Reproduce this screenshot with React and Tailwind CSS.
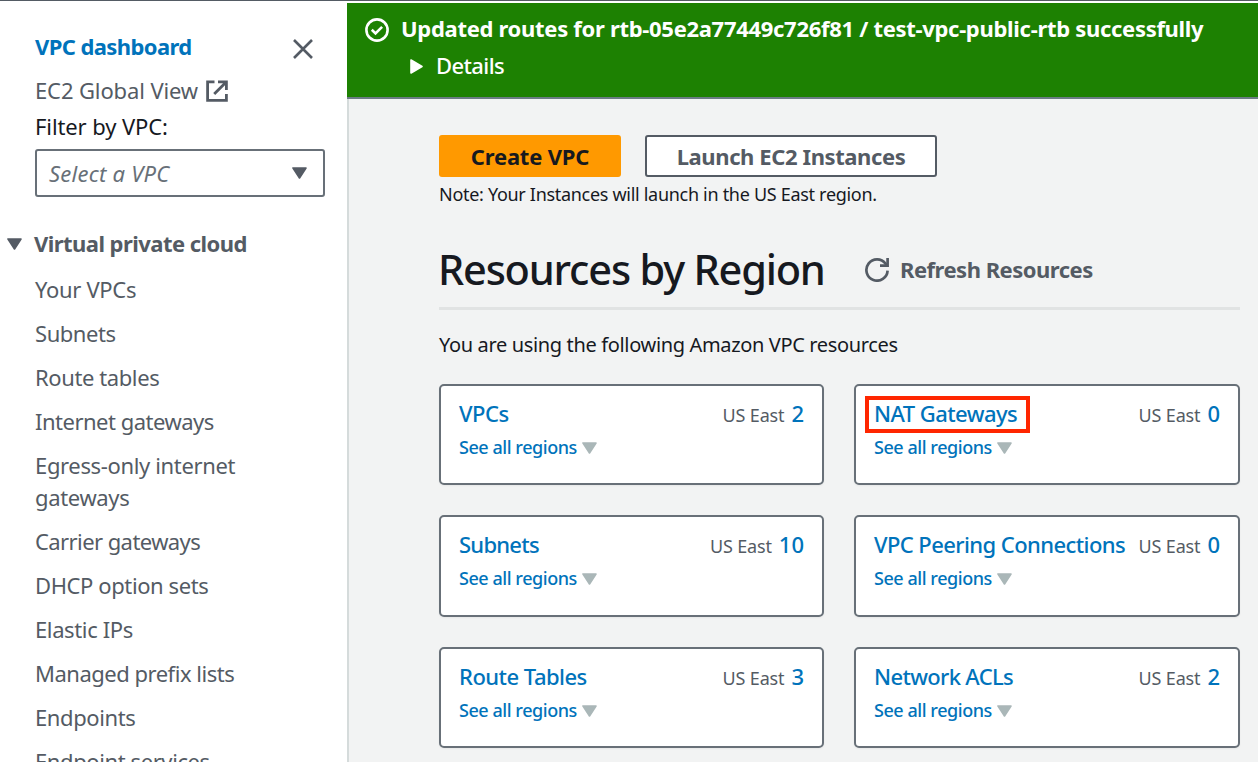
import React from "react";

const navItems = [
  { label: "Your VPCs", spacing: "tracking-[-0.32px]" },
  { label: "Subnets", spacing: "tracking-[-0.45px]" },
  { label: "Route tables", spacing: "tracking-[-0.4px]" },
  { label: "Internet gateways", spacing: "tracking-[-0.5px]" },
  { label: "Egress-only internet gateways", spacing: "tracking-[-0.35px]" },
  { label: "Carrier gateways", spacing: "tracking-[-0.58px]" },
  { label: "DHCP option sets", spacing: "tracking-[-0.4px]" },
  { label: "Elastic IPs", spacing: "tracking-[-0.38px]" },
  { label: "Managed prefix lists", spacing: "tracking-[-0.49px]" },
  { label: "Endpoints", spacing: "tracking-[-0.4px]" },
  { label: "Endpoint services", spacing: "tracking-[-0.4px]" },
];

const resources = [
  { name: "VPCs", count: 2, spacing: "tracking-[-0.45px]" },
  { name: "NAT Gateways", count: 0, spacing: "tracking-[-0.56px]", highlighted: true },
  { name: "Subnets", count: 10, spacing: "tracking-[-0.75px]" },
  { name: "VPC Peering Connections", count: 0, spacing: "tracking-[-0.58px]" },
  { name: "Route Tables", count: 3, spacing: "tracking-[-0.52px]" },
  { name: "Network ACLs", count: 2, spacing: "tracking-[-0.66px]" },
];

function Caret({ className }) {
  return (
    <svg viewBox="0 0 15 12" className={className} fill="currentColor" stroke="currentColor" strokeWidth="1.6" strokeLinejoin="round">
      <path d="M1 1h13L7.5 11z" />
    </svg>
  );
}

function CloseIcon() {
  return (
    <svg viewBox="0 0 20 20" className="h-5 w-5" fill="none" stroke="currentColor" strokeWidth="2.6">
      <path d="M1 1l18 18M19 1L1 19" />
    </svg>
  );
}

function ExternalIcon() {
  return (
    <svg viewBox="0 0 22 22" className="h-[22px] w-[22px]" fill="none" stroke="currentColor" strokeWidth="2.8">
      <path d="M8.5 1.9H1.6v18.5h18.8V14" />
      <path d="M12 1.9h8.4V10M20 2.2L8.2 14" />
    </svg>
  );
}

function SuccessIcon() {
  return (
    <svg viewBox="0 0 24 24" className="h-6 w-6 shrink-0" fill="none" stroke="currentColor" strokeWidth="2.6">
      <circle cx="12" cy="12" r="10.6" />
      <path d="M6.8 11.8l3.7 3.6 6.6-6.6" />
    </svg>
  );
}

function RefreshIcon() {
  return (
    <svg viewBox="0 0 24 24" className="h-6 w-6 shrink-0" fill="none" stroke="currentColor" strokeWidth="2.7">
      <path d="M22.6 12.6A10.6 10.6 0 1 1 20.6 5.8L22 7.8" />
      <path d="M22.6 0v7.6H15" />
    </svg>
  );
}

function Sidebar() {
  return (
    <aside className="w-[347px] shrink-0 bg-white text-[22px] leading-8 text-[#545b64]">
      <div className="flex items-center justify-between pt-[27px] pr-[34px] pl-[35px]">
        <a className="font-bold tracking-[-0.6px] text-[#0073bb]">VPC dashboard</a>
        <span className="pt-1.5"><CloseIcon /></span>
      </div>
      <div className="mt-3 flex items-center gap-2 pl-[35px]">
        <span className="tracking-[-0.12px]">EC2 Global View</span>
        <span className="pt-0.5"><ExternalIcon /></span>
      </div>
      <div className="mt-1 pl-[35px] tracking-[-0.1px] text-[#16191f]">Filter by VPC:</div>
      <div className="mt-[7px] ml-[35px] flex h-12 w-[290px] items-center justify-between rounded-[3px] border-2 border-[#687078] pr-4 pl-3">
        <span className="tracking-[0.25px] text-[#687078] italic">Select a VPC</span>
        <Caret className="h-3 w-[15px]" />
      </div>
      <div className="mt-[30px] flex items-center pl-[7px]">
        <span className="pt-0.5"><Caret className="h-3 w-[15px]" /></span>
        <span className="ml-3 font-bold tracking-[-0.55px]">Virtual private cloud</span>
      </div>
      <ul className="mt-3.5 flex flex-col gap-3 pr-[80px] pl-[35px]">
        {navItems.map((item) => (
          <li key={item.label} className={item.spacing}>{item.label}</li>
        ))}
      </ul>
    </aside>
  );
}

function Banner() {
  return (
    <div className="h-24 border-b-2 border-[#6b7c84] bg-[#1d8102] pt-[9px] pl-[18px] text-[22px] leading-8 text-white">
      <div className="flex items-center">
        <span className="pt-1"><SuccessIcon /></span>
        <span className="ml-3 font-bold tracking-[-0.3px] whitespace-nowrap">
          Updated routes for rtb-05e2a77449c726f81 / test-vpc-public-rtb successfully
        </span>
      </div>
      <div className="mt-[5px] flex items-center pl-[45px]">
        <span className="pt-0.5">
          <svg viewBox="0 0 13 15" className="h-[15px] w-[13px]" fill="currentColor" stroke="currentColor" strokeWidth="1.6" strokeLinejoin="round">
            <path d="M1 1v13l11-6.5z" />
          </svg>
        </span>
        <span className="ml-[13px] font-medium tracking-[-0.6px]">Details</span>
      </div>
    </div>
  );
}

function ResourceCard({ name, count, spacing, highlighted }) {
  return (
    <div className="rounded-[5px] border-2 border-[#687078] bg-white px-[18px] pt-[11px] shadow-xs">
      <div className="flex items-baseline justify-between whitespace-nowrap">
        <div className="relative">
          <a className={`text-[22px] leading-8 font-medium text-[#0073bb] ${spacing}`}>{name}</a>
          {highlighted && <span className="absolute -top-px -left-[9px] h-[37px] w-[165px] border-4 border-[#ff2600]" />}
        </div>
        <div className="flex items-baseline gap-[7px]">
          <span className="text-[18px] tracking-[-0.15px] text-[#545b64]">US East</span>
          <span className="text-[22px] leading-8 font-medium text-[#0073bb]">{count}</span>
        </div>
      </div>
      <div className="mt-1.5 flex items-center gap-[5px] leading-6 text-[#0073bb]">
        <span className="text-[18px] font-medium tracking-[-0.45px]">See all regions</span>
        <span className="pt-px"><Caret className="h-3 w-[15px] text-[#aab7b8]" /></span>
      </div>
    </div>
  );
}

function Dashboard() {
  return (
    <main className="h-[663px] border-l-2 border-[#d5dbdb] bg-[#f2f3f3] pt-9 pr-[18px] pl-[90px] text-[#16191f]">
      <div className="flex gap-6 text-[22px] leading-8 font-bold whitespace-nowrap">
        <button className="flex h-[42px] w-[182px] items-center justify-center rounded-[3px] bg-[#ff9900] tracking-[-0.2px]">Create VPC</button>
        <button className="flex h-[42px] w-[292px] items-center justify-center rounded-[3px] border-2 border-[#545b64] bg-white tracking-[-0.4px] text-[#545b64]">
          Launch EC2 Instances
        </button>
      </div>
      <p className="mt-[5px] text-[18px] leading-6 tracking-[-0.3px]">Note: Your Instances will launch in the US East region.</p>
      <div className="mt-[35px] flex h-[69px] border-b-[3px] border-[#e1e3e3]">
        <h1 className="-ml-px w-[387px] text-[41.5px] leading-[56px] font-medium tracking-[-1.2px] whitespace-nowrap">Resources by Region</h1>
        <div className="ml-10 flex h-[58px] items-center text-[22px] leading-8 font-bold text-[#545b64]">
          <RefreshIcon />
          <span className="ml-[11px] pb-[3px] tracking-[-0.5px] whitespace-nowrap">Refresh Resources</span>
        </div>
      </div>
      <p className="mt-[21px] text-[20px] leading-7 tracking-[-0.35px]">You are using the following Amazon VPC resources</p>
      <div className="mt-[25px] grid grid-cols-[385px_386px] grid-rows-[101px_102px_101px] gap-[30px]">
        {resources.map((r) => (
          <ResourceCard key={r.name} {...r} />
        ))}
      </div>
    </main>
  );
}

export default function App() {
  return (
    <div className="flex h-[762px] w-[1258px] flex-col overflow-hidden bg-white font-['Noto_Sans',sans-serif]">
      <div className="h-[3px] shrink-0 border-t border-[#545b64]" />
      <div className="flex h-[759px] overflow-hidden">
        <Sidebar />
        <div className="min-w-0 flex-1">
          <Banner />
          <Dashboard />
        </div>
      </div>
    </div>
  );
}
